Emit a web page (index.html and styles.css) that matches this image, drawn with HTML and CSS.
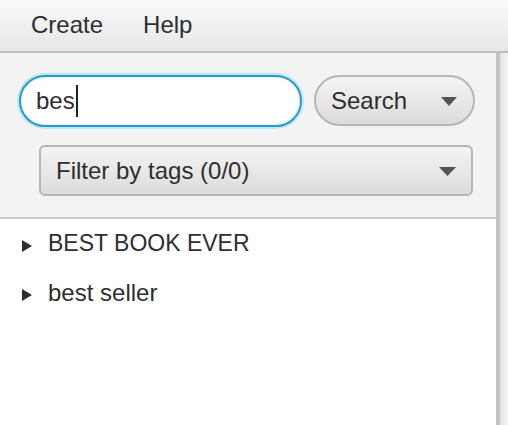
FILE: index.html
```html
<!DOCTYPE html>
<html>
<head>
<meta charset="utf-8">
<link rel="stylesheet" href="styles.css">
</head>
<body>
<div class="app">
  <div class="menubar">
    <span class="menu-item">Create</span>
    <span class="menu-item">Help</span>
  </div>
  <div class="content">
    <div class="main">
      <div class="panel">
        <div class="search-row">
          <div class="field"><span class="field-text">bes</span><span class="caret"></span></div>
          <div class="button search-btn">
            <span>Search</span>
            <svg class="arrow" width="16" height="9" viewBox="0 0 16 9"><path d="M0 0 H16 L8 9 Z" fill="#555"/></svg>
          </div>
        </div>
        <div class="button combo">
          <span>Filter by tags (0/0)</span>
          <svg class="arrow" width="17" height="9" viewBox="0 0 17 9"><path d="M0 0 H17 L8.5 9 Z" fill="#555"/></svg>
        </div>
      </div>
      <div class="tree">
        <div class="tree-row">
          <svg class="disclosure" width="10" height="12" viewBox="0 0 10 12"><path d="M0 0 L10 6 L0 12 Z" fill="#2e2e2e"/></svg>
          <span>BEST BOOK EVER</span>
        </div>
        <div class="tree-row">
          <svg class="disclosure" width="10" height="12" viewBox="0 0 10 12"><path d="M0 0 L10 6 L0 12 Z" fill="#2e2e2e"/></svg>
          <span class="lower">best seller</span>
        </div>
      </div>
    </div>
    <div class="edge">
      <div class="edge-line"></div>
      <div class="edge-fill"></div>
    </div>
  </div>
</div>
</body>
</html>
```

FILE: styles.css
```css
* { box-sizing: border-box; }
html, body {
  margin: 0;
  padding: 0;
  width: 508px;
  height: 425px;
  overflow: hidden;
  background: #ffffff;
  font-family: "Liberation Sans", Arial, sans-serif;
  color: #2e2e2e;
}
.app {
  display: flex;
  flex-direction: column;
  height: 425px;
}
.menubar {
  height: 53px;
  flex: none;
  display: flex;
  align-items: center;
  padding: 0 0 2px 11px;
  background: linear-gradient(#fafafa, #e7e7e7);
  border-bottom: 2px solid #bebebe;
  font-size: 24px;
}
.menu-item {
  padding: 0 20px;
}
.content {
  flex: 1;
  display: flex;
}
.main {
  width: 496px;
  display: flex;
  flex-direction: column;
}
.panel {
  height: 166px;
  flex: none;
  background: #f3f3f3;
  border-bottom: 2px solid #cbcbcb;
  padding: 22px 0 0 19px;
}
.search-row {
  display: flex;
  gap: 12px;
}
.field {
  width: 283px;
  height: 52px;
  border-radius: 26px;
  background: #fff;
  border: 2px solid #2a9bc6;
  box-shadow: 0 0 0 2px #bfe6f4, inset 0 0 0 1px #e4f4fa;
  display: flex;
  align-items: center;
  padding-left: 15px;
  font-size: 24px;
}
.caret {
  width: 2px;
  height: 32px;
  background: #222;
  margin-left: 1px;
}
.button {
  display: flex;
  align-items: center;
  justify-content: space-between;
  background: linear-gradient(#f4f4f4, #dcdcdc);
  border: 2px solid #b6b6b6;
  font-size: 24px;
  color: #2e2e2e;
}
.search-btn {
  width: 161px;
  height: 51px;
  border-radius: 26px;
  padding: 0 16px 0 15px;
}
.combo {
  width: 434px;
  height: 51px;
  margin: 18px 0 0 20px;
  border-radius: 6px;
  padding: 0 15px 0 15px;
}
.arrow {
  display: block;
  margin-top: 1px;
}
.tree {
  flex: 1;
  background: #fff;
}
.tree-row {
  height: 49px;
  display: flex;
  align-items: center;
  padding-left: 22px;
  font-size: 23px;
  color: #2e2e2e;
}
.lower {
  font-size: 24px;
}
.disclosure {
  display: block;
  margin: 4px 16px 0 0;
}
.edge {
  flex: 1;
  display: flex;
}
.edge-line {
  width: 4px;
  background: #c5c5c5;
}
.edge-fill {
  flex: 1;
  background: linear-gradient(to right, #e2e2e2, #f6f6f6);
}
```
